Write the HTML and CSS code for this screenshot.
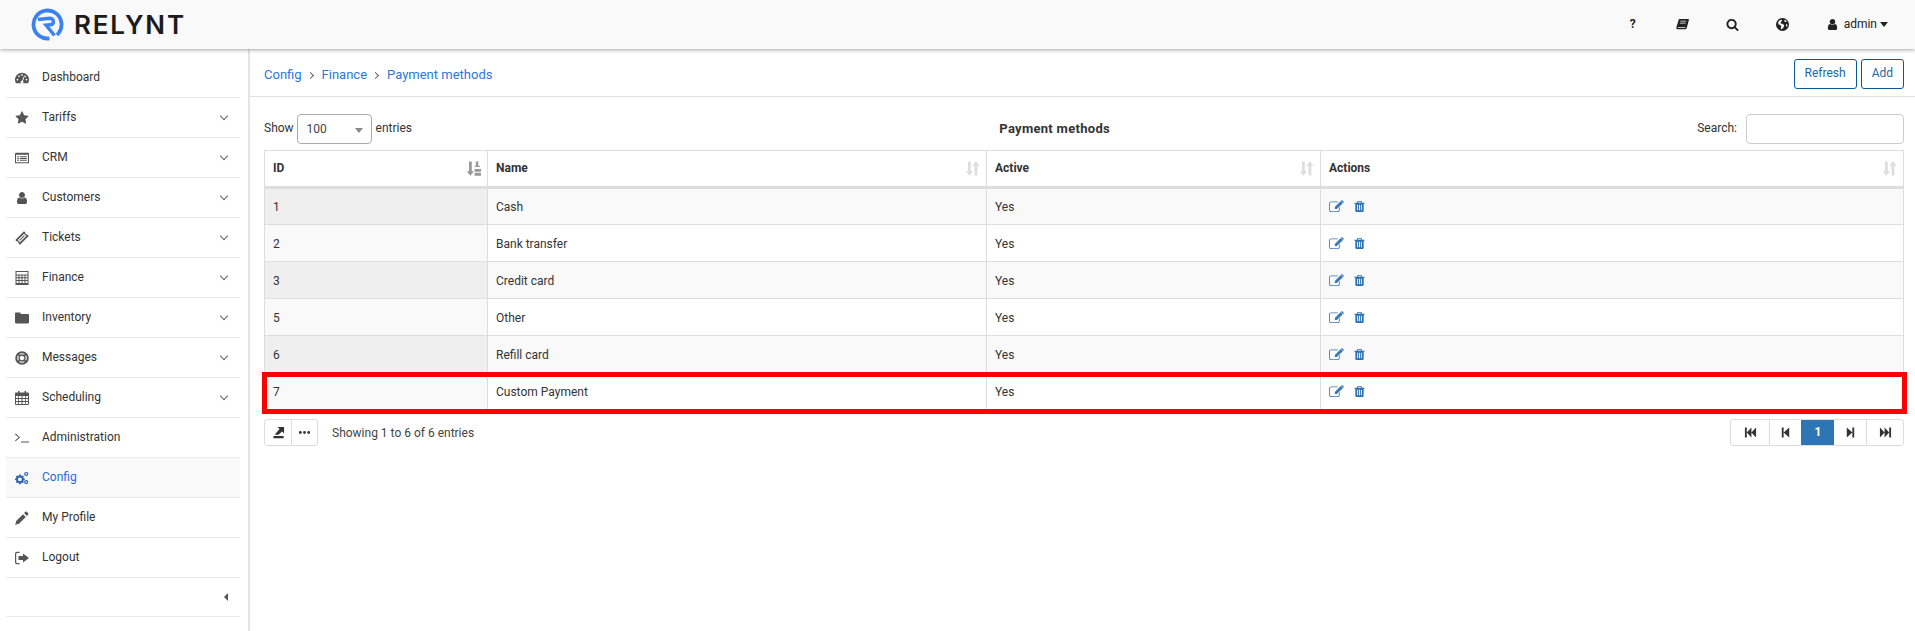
FILE: index.html
```html
<!DOCTYPE html>
<html lang="en">
<head>
<meta charset="utf-8">
<title>Payment methods</title>
<link rel="stylesheet" href="styles.css">
</head>
<body>
<svg class="defs" width="0" height="0" aria-hidden="true">
  <symbol id="i-dashboard" viewBox="0 0 16 14"><path d="M8 1C3.600 1 0 4.600 0 9c0 1.500.4 2.900 1.100 4h13.800c.7-1.100 1.100-2.500 1.100-4 0-4.400-3.600-8-8-8z"/><g fill="#fff"><circle cx="2.800" cy="8.800" r="1"/><circle cx="4.500" cy="5" r="1"/><circle cx="8" cy="3.500" r="1"/><circle cx="13.200" cy="8.800" r="1"/><circle cx="11.500" cy="5" r="1"/><path d="M9.800 5.500l1 .4-1.700 4.600a1.600 1.600 0 1 1-1-.4z"/></g></symbol>
  <symbol id="i-star" viewBox="0 0 1792 1792"><path d="M1728 647q0 22-26 48l-363 354 86 500q1 7 1 20 0 21-10.500 35.500t-30.500 14.500q-19 0-40-12l-449-236-449 236q-22 12-40 12-21 0-31.500-14.500t-10.500-35.500q0-6 2-20l86-500-364-354q-25-27-25-48 0-37 56-46l502-73 225-455q19-41 49-41t49 41l225 455 502 73q56 9 56 46z"/></symbol>
  <symbol id="i-list" viewBox="0 0 16 14"><path fill-rule="evenodd" d="M1 1h14a1 1 0 0 1 1 1v10a1 1 0 0 1-1 1H1a1 1 0 0 1-1-1V2a1 1 0 0 1 1-1zm.2 2.400v8.400h13.600V3.400z"/><path d="M2.500 5h2v1.200h-2zM5.500 5h8v1.200h-8zM2.500 7h2v1.200h-2zM5.500 7h8v1.200h-8zM2.500 9h2v1.200h-2zM5.500 9h8v1.200h-8z"/></symbol>
  <symbol id="i-user" viewBox="0 0 1792 1792"><path d="M1536 1399q0 109-62.500 187t-150.500 78h-854q-88 0-150.500-78t-62.500-187q0-85 8.500-160.500t31.500-152 58.500-131 94-89 134.500-34.500q131 128 313 128t313-128q76 0 134.500 34.500t94 89 58.500 131 31.500 152 8.500 160.500zm-256-887q0 159-112.500 271.500t-271.500 112.500-271.500-112.500-112.500-271.500 112.500-271.500 271.500-112.500 271.500 112.500 112.500 271.500z"/></symbol>
  <symbol id="i-ticket" viewBox="0 0 14 14"><path fill-rule="evenodd" d="M9 .3l1.500 1.500a1.300 1.300 0 0 0 1.700 1.700L13.700 5 5 13.700l-1.500-1.500a1.300 1.300 0 0 0-1.700-1.700L.3 9zM9 2.800L2.800 9 5 11.200 11.200 5zM9 4.300L9.700 5 5 9.700 4.300 9z"/></symbol>
  <symbol id="i-calc" viewBox="0 0 14 14"><path fill-rule="evenodd" d="M.5 0h13v14H.5zM1.500 1v2.500h11V1zm0 3.500v1.800h2v-1.800zm3 0v1.800h2v-1.800zm3 0v1.800h2v-1.800zm3 0v1.800h2v-1.800zm-9 2.700V9h2V7.200zm3 0V9h2V7.200zm3 0V9h2V7.200zm3 0V9h2V7.200zm-9 2.800v2h2v-2zm3 0v2h2v-2zm3 0v2h2v-2zm3 0v2h2v-2z"/></symbol>
  <symbol id="i-folder" viewBox="0 0 14 14"><path d="M1.200 1.500h3.300c.7 0 1.200.5 1.200 1.200v.3h7.100c.7 0 1.200.5 1.200 1.200v7.100c0 .7-.5 1.200-1.200 1.200H1.200C.5 12.500 0 12 0 11.300V2.700C0 2 .5 1.500 1.200 1.500z"/></symbol>
  <symbol id="i-support" viewBox="0 0 14 14"><circle cx="7" cy="7" r="5.800" fill="none" stroke="currentColor" stroke-width="2"/><circle cx="7" cy="7" r="3" fill="none" stroke="currentColor" stroke-width="1.300"/><path d="M2.200 3.400L3.400 2.200 6 4.800 4.800 6zM10.600 2.200l1.200 1.200L9.200 6 8 4.800zM2.200 10.600L4.800 8 6 9.200 3.400 11.800zM9.200 8l2.600 2.600-1.200 1.200L8 9.200z"/></symbol>
  <symbol id="i-calendar" viewBox="0 0 14 14"><path fill-rule="evenodd" d="M3 0h1.500v1.500h5V0H11v1.500h2a1 1 0 0 1 1 1V13a1 1 0 0 1-1 1H1a1 1 0 0 1-1-1V2.500a1 1 0 0 1 1-1h2zM1 5v2h2.200V5zm3 0v2h2.500V5zm3.500 0v2H10V5zm3.300 0v2H13V5zM1 8v2h2.200V8zm3 0v2h2.500V8zm3.500 0v2H10V8zm3.300 0v2H13V8zM1 11v2h2.200v-2zm3 0v2h2.500v-2zm3.500 0v2H10v-2zm3.300 0v2H13v-2z"/></symbol>
  <symbol id="i-terminal" viewBox="0 0 14 14"><path d="M0 3.300l.7-.7L5 6.400 .7 10.200 0 9.500l3.600-3.100zM6 10.500h8v1H6z"/></symbol>
  <symbol id="i-cogs" viewBox="0 0 16 14"><path fill-rule="evenodd" d="M4.700 3h1.800l.3 1.200 1 .4 1.100-.6 1.200 1.300-.6 1 .4 1 1.200.3v1.800l-1.200.3-.4 1 .6 1-1.200 1.300-1.100-.6-1 .4-.3 1.200H4.700l-.3-1.200-1-.4-1.100.6L1 11.700l.6-1-.4-1L0 9.400V7.600l1.200-.3.400-1-.6-1 1.300-1.300 1.100.6 1-.4zm.9 3.300a2.200 2.200 0 1 0 0 4.400 2.200 2.200 0 0 0 0-4.400z"/><path fill-rule="evenodd" d="M12.800 0a2.400 2.400 0 1 1 0 4.800 2.400 2.400 0 0 1 0-4.800zm0 1.400a1 1 0 1 0 0 2 1 1 0 0 0 0-2zM12.800 9.200a2.400 2.400 0 1 1 0 4.800 2.400 2.400 0 0 1 0-4.800zm0 1.400a1 1 0 1 0 0 2 1 1 0 0 0 0-2z"/></symbol>
  <symbol id="i-pencil" viewBox="0 0 14 14"><path d="M10.400.8a1 1 0 0 1 1.400 0l1.400 1.400a1 1 0 0 1 0 1.400l-1.300 1.300-2.800-2.800zM8 3.200L10.800 6l-6.800 6.800-3.800 1 1-3.800z"/></symbol>
  <symbol id="i-logout" viewBox="0 0 14 14"><path d="M4.500 2H2a.8.800 0 0 0-.8.8v8.400c0 .4.400.8.800.8h2.500v1.200H2a2 2 0 0 1-2-2V2.800a2 2 0 0 1 2-2h2.500z"/><path d="M8 2.500L14 7l-6 4.500V9H3.500V5H8z"/></symbol>
  <symbol id="i-book" viewBox="0 0 14 14"><path d="M3.500 1h9.800c.5 0 .7.400.6.800l-2.300 9c-.2.700-.7 1.200-1.500 1.200H1.600C.7 12 .2 11.200.3 10.300L3 1.500C3.100 1.200 3.200 1 3.500 1zM4.800 3l-.2.800h6.200l.2-.8zM4.200 5l-.2.800h6.200l.2-.8zM2.300 10c-.5 0-.6.800 0 .8h7.500c.3 0 .5-.4.600-.8z" fill-rule="evenodd"/></symbol>
  <symbol id="i-globe" viewBox="0 0 14 14"><path fill-rule="evenodd" d="M7 0a7 7 0 1 1 0 14A7 7 0 0 1 7 0zM4 2.400L2.200 4.600l.6 2.300 2 .7.800 1.800-.5 2.200 1.300.5 2-2.500.4-2-2-1.500-1.500-.2-.4-1.200L6.500 3l-.5-1.200zM9.500 2l-.8 1.400 1.500 1 1.500-.4A5.500 5.500 0 0 0 9.500 2zm2.400 4.400l-1.300.5.700 2.400.7.200a5.500 5.500 0 0 0-.1-3.100z"/></symbol>
  <symbol id="i-edit" viewBox="0 0 16 14"><path d="M2.200 1.500h7.300v.9H2.200c-.7 0-1.300.6-1.300 1.300v7.100c0 .7.600 1.300 1.300 1.300h7.100c.7 0 1.300-.6 1.300-1.300V8.300l.9-.9v3.400c0 1.200-1 2.200-2.200 2.200H2.200C1 13 0 12 0 10.800V3.700C0 2.500 1 1.500 2.200 1.500z"/><path d="M12.600 1.200l2.200 2.200-6.400 6.400H6.200V7.600zM13.400.4a.7.700 0 0 1 1 0l1.200 1.200a.7.700 0 0 1 0 1l-.5.5-2.200-2.200z"/></symbol>
  <symbol id="i-trash" viewBox="0 0 1792 1792"><path d="M704 1376v-704q0-14-9-23t-23-9h-64q-14 0-23 9t-9 23v704q0 14 9 23t23 9h64q14 0 23-9t9-23zm256 0v-704q0-14-9-23t-23-9h-64q-14 0-23 9t-9 23v704q0 14 9 23t23 9h64q14 0 23-9t9-23zm256 0v-704q0-14-9-23t-23-9h-64q-14 0-23 9t-9 23v704q0 14 9 23t23 9h64q14 0 23-9t9-23zm-544-992h448l-48-117q-7-9-17-11h-317q-10 2-17 11zm928 32v64q0 14-9 23t-23 9h-96v948q0 83-47 143.500t-113 60.500h-832q-66 0-113-58.500t-47-141.500v-952h-96q-14 0-23-9t-9-23v-64q0-14 9-23t23-9h309l70-167q15-37 54-63t79-26h320q40 0 79 26t54 63l70 167h309q14 0 23 9t9 23z"/></symbol>
  <symbol id="i-sort" viewBox="0 0 14 14"><path d="M2.800 .5h2.600v9h2.100L4.100 13.800.7 9.500h2.100zM10.200 .2l3.400 4.300h-2.100v9H8.900v-9H6.800z"/></symbol>
  <symbol id="i-sort-num" viewBox="0 0 14 14"><path d="M2.800 .5h2.600v9h2.100L4.100 13.800.7 9.500h2.100zM9.200 .5h2.300v4H13v1H8.200v-1h1zM8 7.500h6v2.500H8zM8 11h6v2.800H8z"/></symbol>
  <symbol id="i-export" viewBox="0 0 14 14"><path d="M1.500 10.800h11v2.400h-11zM6 1h7v7l-2.200-2.200L7 9.500H3.500v-1L8.200 3.200z"/></symbol>
  <symbol id="i-dots" viewBox="0 0 14 14"><circle cx="2.500" cy="7" r="1.500"/><circle cx="7" cy="7" r="1.500"/><circle cx="11.500" cy="7" r="1.500"/></symbol>
  <symbol id="i-first" viewBox="0 0 14 14"><path d="M1 1.500h2v11H1zM3 7l5-5.500v11zM8 7l5-5.500v11z"/></symbol>
  <symbol id="i-prev" viewBox="0 0 14 14"><path d="M3 1.500h2v11H3zM5 7l6-5.500v11z"/></symbol>
  <symbol id="i-next" viewBox="0 0 14 14"><path d="M11 1.500H9v11h2zM9 7L3 1.500v11z"/></symbol>
  <symbol id="i-last" viewBox="0 0 14 14"><path d="M13 1.500h-2v11h2zM11 7L6 1.500v11zM6 7L1 1.500v11z"/></symbol>
  <symbol id="i-search" viewBox="0 0 1792 1792"><path d="M1216 832q0-185-131.500-316.500t-316.500-131.500-316.500 131.500-131.500 316.500 131.500 316.500 316.500 131.500 316.500-131.500 131.500-316.500zm512 832q0 52-38 90t-90 38q-54 0-90-38l-343-342q-179 124-399 124-143 0-273.500-55.500t-225-150-150-225-55.500-273.500 55.500-273.500 150-225 225-150 273.500-55.500 273.500 55.500 225 150 150 225 55.500 273.500q0 220-124 399l343 343q37 37 37 90z"/></symbol>
</svg>

<div class="app">
  <header class="topbar">
    <div class="brand">
      <svg class="brand-mark" viewBox="0 0 33 33"><circle cx="16.500" cy="16.500" r="14" fill="none" stroke="#3b82f0" stroke-width="3.800" stroke-dasharray="79 9" transform="rotate(82 16.500 16.500)"/><path d="M7 11.500l12-1.300c4.500 0 4.500 6.300 0 6.600l-4 .4 8.500 10.300" fill="none" stroke="#3b82f0" stroke-width="3.400"/></svg>
      <span class="brand-name">RELYNT</span>
    </div>
    <nav class="top-icons">
      <span class="top-item top-q">?</span>
      <span class="top-item"><svg class="ic13"><use href="#i-book"/></svg></span>
      <span class="top-item"><svg class="ic13"><use href="#i-search"/></svg></span>
      <span class="top-item"><svg class="ic13"><use href="#i-globe"/></svg></span>
      <span class="top-user"><svg class="ic13"><use href="#i-user"/></svg><span>admin</span><i class="caret"></i></span>
    </nav>
  </header>

  <div class="body">
    <aside class="sidebar">
      <a class="side-item"><svg class="side-ic"><use href="#i-dashboard"/></svg><span>Dashboard</span></a>
      <a class="side-item"><svg class="side-ic"><use href="#i-star"/></svg><span>Tariffs</span><i class="chev"></i></a>
      <a class="side-item"><svg class="side-ic"><use href="#i-list"/></svg><span>CRM</span><i class="chev"></i></a>
      <a class="side-item"><svg class="side-ic"><use href="#i-user"/></svg><span>Customers</span><i class="chev"></i></a>
      <a class="side-item"><svg class="side-ic"><use href="#i-ticket"/></svg><span>Tickets</span><i class="chev"></i></a>
      <a class="side-item"><svg class="side-ic"><use href="#i-calc"/></svg><span>Finance</span><i class="chev"></i></a>
      <a class="side-item"><svg class="side-ic"><use href="#i-folder"/></svg><span>Inventory</span><i class="chev"></i></a>
      <a class="side-item"><svg class="side-ic"><use href="#i-support"/></svg><span>Messages</span><i class="chev"></i></a>
      <a class="side-item"><svg class="side-ic"><use href="#i-calendar"/></svg><span>Scheduling</span><i class="chev"></i></a>
      <a class="side-item"><svg class="side-ic"><use href="#i-terminal"/></svg><span>Administration</span></a>
      <a class="side-item is-active"><svg class="side-ic"><use href="#i-cogs"/></svg><span>Config</span></a>
      <a class="side-item"><svg class="side-ic"><use href="#i-pencil"/></svg><span>My Profile</span></a>
      <a class="side-item"><svg class="side-ic"><use href="#i-logout"/></svg><span>Logout</span></a>
      <div class="side-collapse"><i class="caret-left"></i></div>
    </aside>

    <main class="main">
      <div class="crumbbar">
        <div class="crumbs">
          <a>Config</a><i class="crumb-sep"></i><a>Finance</a><i class="crumb-sep"></i><a>Payment methods</a>
        </div>
        <div class="crumb-actions">
          <button class="btn">Refresh</button>
          <button class="btn">Add</button>
        </div>
      </div>

      <section class="content">
        <div class="toolbar">
          <div class="length"><span>Show</span><span class="select">100<i class="select-caret"></i></span><span class="length-after">entries</span></div>
          <div class="table-title">Payment methods</div>
          <div class="search"><span>Search:</span><span class="search-input"></span></div>
        </div>

        <div class="table-wrap">
          <table class="grid">
            <colgroup><col class="col-id"><col class="col-name"><col class="col-active"><col></colgroup>
            <thead>
              <tr>
                <th>ID<svg class="sort sort-on"><use href="#i-sort-num"/></svg></th>
                <th>Name<svg class="sort"><use href="#i-sort"/></svg></th>
                <th>Active<svg class="sort"><use href="#i-sort"/></svg></th>
                <th>Actions<svg class="sort"><use href="#i-sort"/></svg></th>
              </tr>
            </thead>
            <tbody>
              <tr><td>1</td><td>Cash</td><td>Yes</td><td><span class="acts"><svg class="act-edit"><use href="#i-edit"/></svg><svg class="act-del"><use href="#i-trash"/></svg></span></td></tr>
              <tr><td>2</td><td>Bank transfer</td><td>Yes</td><td><span class="acts"><svg class="act-edit"><use href="#i-edit"/></svg><svg class="act-del"><use href="#i-trash"/></svg></span></td></tr>
              <tr><td>3</td><td>Credit card</td><td>Yes</td><td><span class="acts"><svg class="act-edit"><use href="#i-edit"/></svg><svg class="act-del"><use href="#i-trash"/></svg></span></td></tr>
              <tr><td>5</td><td>Other</td><td>Yes</td><td><span class="acts"><svg class="act-edit"><use href="#i-edit"/></svg><svg class="act-del"><use href="#i-trash"/></svg></span></td></tr>
              <tr><td>6</td><td>Refill card</td><td>Yes</td><td><span class="acts"><svg class="act-edit"><use href="#i-edit"/></svg><svg class="act-del"><use href="#i-trash"/></svg></span></td></tr>
              <tr><td>7</td><td>Custom Payment</td><td>Yes</td><td><span class="acts"><svg class="act-edit"><use href="#i-edit"/></svg><svg class="act-del"><use href="#i-trash"/></svg></span></td></tr>
            </tbody>
          </table>
          <div class="highlight"></div>
        </div>

        <div class="table-foot">
          <div class="foot-left">
            <div class="tools">
              <span class="tool"><svg class="ic13"><use href="#i-export"/></svg></span>
              <span class="tool"><svg class="ic13"><use href="#i-dots"/></svg></span>
            </div>
            <span class="info">Showing 1 to 6 of 6 entries</span>
          </div>
          <div class="pager">
            <span class="page pw-first"><svg class="ic13"><use href="#i-first"/></svg></span>
            <span class="page pw-prev"><svg class="ic13"><use href="#i-prev"/></svg></span>
            <span class="page pw-cur">1</span>
            <span class="page pw-next"><svg class="ic13"><use href="#i-next"/></svg></span>
            <span class="page pw-last"><svg class="ic13"><use href="#i-last"/></svg></span>
          </div>
        </div>
      </section>
    </main>
  </div>
</div>
</body>
</html>
```

FILE: styles.css
```css
* { box-sizing: border-box; }
html, body { margin: 0; padding: 0; height: 100%; overflow: hidden; background: #fff; }
body { font: 12px/1.42857 Roboto, "Liberation Sans", sans-serif; color: #333; }
svg { fill: currentColor; display: block; flex: none; }
.defs { position: absolute; }
a { color: inherit; text-decoration: none; }

.app { display: flex; flex-direction: column; height: 631px; }

.topbar { height: 49px; flex: none; display: flex; justify-content: space-between; align-items: center; background: #f9f9f9; box-shadow: 0 1px 4px rgba(0,0,0,.35); position: relative; z-index: 2; padding: 0 27px 0 31px; }
.brand { display: flex; align-items: center; gap: 10px; }
.brand-mark { width: 33px; height: 33px; }
.brand-name { font: 600 26px/1 Inter, "Noto Sans", sans-serif; letter-spacing: 1.800px; color: #1c1c1c; }
.top-icons { display: flex; align-items: center; color: #222; }
.top-item { width: 50px; display: flex; justify-content: center; }
.top-q { font-weight: 700; font-size: 12px; }
.ic13 { width: 13px; height: 13px; }
.top-user { display: flex; align-items: center; gap: 5px; margin-left: 18px; }
.caret { width: 0; height: 0; border: 4.500px solid transparent; border-top: 5px solid #222; border-bottom: 0; margin-left: -2px; }

.body { flex: 1; display: flex; min-height: 0; }

.sidebar { width: 250px; flex: none; border-right: 2px solid #e4e4e4; padding: 9px 8px 0 6px; }
.side-item { height: 40px; display: flex; align-items: center; border-bottom: 1px solid #e9e9e9; padding: 0 10px 0 9px; color: #333; }
.side-ic { width: 14px; height: 14px; margin-right: 13px; color: #555; }
.side-item span { flex: 1; }
.chev { width: 6px; height: 6px; border-right: 1px solid #666; border-bottom: 1px solid #666; transform: rotate(45deg); margin: -3px 3px 0 0; }
.is-active { background: #f9f9f9; color: #1f6fd6; }
.is-active .side-ic { color: #2d62b4; }
.side-collapse { height: 39px; display: flex; align-items: center; justify-content: flex-end; border-bottom: 1px solid #e9e9e9; padding-right: 12px; }
.caret-left { width: 0; height: 0; border: 4px solid transparent; border-right-color: #555; border-left: 0; }

.main { flex: 1; min-width: 0; display: flex; flex-direction: column; }
.crumbbar { height: 48px; flex: none; display: flex; align-items: center; justify-content: space-between; border-bottom: 1px solid #e2e2e2; padding: 3px 11px 0 14px; }
.crumbs { display: flex; align-items: center; color: #2a78dc; font-size: 13px; margin-top: 2px; }
.crumb-sep { width: 5px; height: 5px; border-top: 1px solid #666; border-right: 1px solid #666; transform: rotate(45deg); margin: 0 9px 0 6px; }
.crumb-actions { display: flex; gap: 4px; }
.btn { height: 30px; padding: 0 10px; background: #fff; border: 1px solid #075a9b; border-radius: 3px; color: #1a69a8; font: inherit; }

.content { padding: 17px 11px 0 14px; }
.toolbar { display: flex; justify-content: space-between; align-items: center; height: 30px; margin-bottom: 6px; }
.length { display: flex; align-items: center; gap: 3px; }
.length-after { margin-left: 1px; }
.select { width: 75px; height: 30px; border: 1px solid #aaa; border-radius: 4px; padding: 2px 9px 0; display: flex; align-items: center; position: relative; color: #444; }
.select-caret { position: absolute; right: 8px; top: 13px; border: 4px solid transparent; border-top: 5px solid #888; border-bottom: 0; }
.table-title { font-weight: 700; font-size: 13px; letter-spacing: .3px; }
.search { display: flex; align-items: center; justify-content: flex-end; gap: 9px; }
.search-input { width: 158px; height: 30px; border: 1px solid #ccc; border-radius: 4px; }

.table-wrap { position: relative; }
.grid { width: 100%; table-layout: fixed; border-collapse: collapse; }
.col-id { width: 223px; }
.col-name { width: 499px; }
.col-active { width: 334px; }
.grid th, .grid td { border: 1px solid #ddd; padding: 0 8px; text-align: left; }
.grid th { height: 37px; border-bottom: 3px solid #ddd; font-weight: 700; position: relative; }
.grid td { height: 37px; padding-top: 3px; }
.grid tbody tr:nth-child(odd) td { background: #f9f9f9; }
.grid tbody tr:nth-child(odd) td:first-child { background: #efefef; }
.grid tbody tr:nth-child(even) td:first-child { background: #f9f9f9; }
.sort { position: absolute; right: 6px; top: 10px; width: 15px; height: 15px; color: #ddd; }
.sort-on { color: #999; }
.acts { display: flex; align-items: center; gap: 9px; margin-top: -3px; }
.act-edit { width: 15px; height: 13px; color: #3b78b8; }
.act-del { width: 13px; height: 13px; color: #2d72b0; }
.highlight { position: absolute; left: -2px; right: -3px; top: 222px; height: 42px; border: 5px solid #f00; pointer-events: none; }

.table-foot { display: flex; justify-content: space-between; margin-top: 9px; }
.foot-left { display: flex; align-items: center; gap: 14px; }
.tools { display: flex; height: 27px; border: 1px solid #ddd; border-radius: 3px; }
.tool { width: 26px; display: flex; align-items: center; justify-content: center; color: #333; }
.tool + .tool { border-left: 1px solid #ddd; }
.info { color: #444; padding-top: 3px; }
.pager { display: flex; height: 27px; border: 1px solid #ddd; border-radius: 3px; overflow: hidden; }
.page { display: flex; align-items: center; justify-content: center; border-left: 1px solid #ddd; color: #333; }
.page:first-child { border-left: 0; }
.pw-first { width: 38px; }
.pw-prev { width: 32px; }
.pw-cur { width: 33px; background: #2e75b5; border-left-color: #2e75b5; color: #fff; font-weight: 700; }
.pw-next { width: 32px; border-left: 0; }
.pw-last { width: 37px; }
```
